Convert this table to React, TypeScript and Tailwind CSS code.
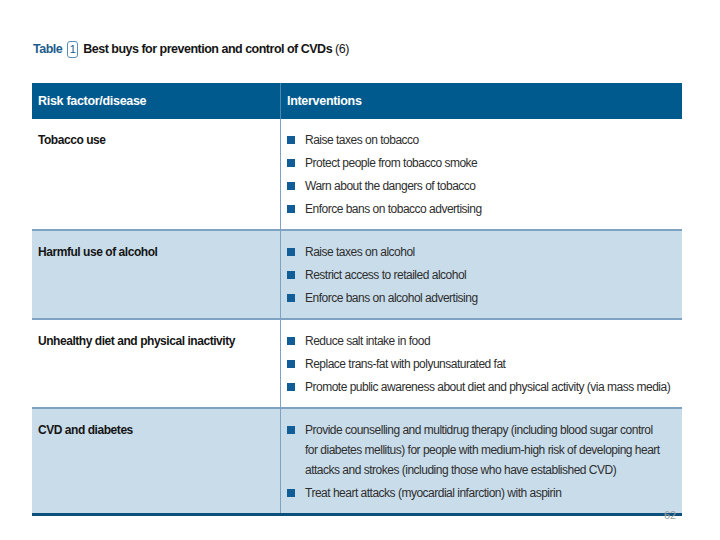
const rows = [
  {
    label: 'Tobacco use',
    shaded: false,
    items: [
      ['Raise taxes on tobacco'],
      ['Protect people from tobacco smoke'],
      ['Warn about the dangers of tobacco'],
      ['Enforce bans on tobacco advertising'],
    ],
  },
  {
    label: 'Harmful use of alcohol',
    shaded: true,
    items: [['Raise taxes on alcohol'], ['Restrict access to retailed alcohol'], ['Enforce bans on alcohol advertising']],
  },
  {
    label: 'Unhealthy diet and physical inactivity',
    shaded: false,
    items: [
      ['Reduce salt intake in food'],
      ['Replace trans-fat with polyunsaturated fat'],
      ['Promote public awareness about diet and physical activity (via mass media)'],
    ],
  },
  {
    label: 'CVD and diabetes',
    shaded: true,
    items: [
      [
        'Provide counselling and multidrug therapy (including blood sugar control',
        'for diabetes mellitus) for people with medium-high risk of developing heart',
        'attacks and strokes (including those who have established CVD)',
      ],
      ['Treat heart attacks (myocardial infarction) with aspirin'],
    ],
  },
]

export default function App() {
  return (
    <div
      className="relative w-[720px] h-[540px] bg-white text-[#2e2e2e]"
      style={{ fontFamily: '"Liberation Sans", Arial, sans-serif' }}
    >
      <div className="px-[32px] pt-[39px]">
        {/* Title */}
        <div className="flex items-center h-[20px] text-[12.5px] font-bold tracking-[-0.5px]">
          <span className="text-[#1d5c8c] ml-[1px]">Table</span>
          <span className="ml-[5px] mr-[5px] flex items-center justify-center w-[11px] h-[17px] border border-[#5a8fba] rounded-[3px] text-[11px] font-normal text-[#1d5c8c] tracking-normal">
            1
          </span>
          <span className="text-[#151515]">
            Best buys for prevention and control of CVDs <span className="font-normal">(6)</span>
          </span>
        </div>

        {/* Table */}
        <div className="mt-[24px] w-[650px]">
          <div className="grid grid-cols-[249px_1fr] h-[36px] bg-[#005a8e] text-white font-bold text-[12.5px] tracking-[-0.3px]">
            <div className="flex items-center pl-[6px] border-r border-[#4c86b3]">Risk factor/disease</div>
            <div className="flex items-center pl-[6px]">Interventions</div>
          </div>

          {rows.map((row, i) => (
            <div
              key={row.label}
              className={`grid grid-cols-[249px_1fr] leading-[20px] ${row.shaded ? 'bg-[#c9dcea]' : 'bg-white'} ${
                i < rows.length - 1 ? 'border-b-2 border-[#7ea3c2]' : 'border-b-[3px] border-[#0d4f7c]'
              }`}
            >
              <div className="pl-[6px] pt-[11px] pb-[10px] border-r border-[#7ea3c2] font-bold text-[12px] tracking-[-0.45px] text-[#151515]">
                {row.label}
              </div>
              <div className="pl-[6px] pt-[11px] pb-[10px] flex flex-col gap-[3px] text-[12px] tracking-[-0.5px]">
                {row.items.map((lines) => (
                  <div key={lines[0]} className="flex">
                    <span className="mt-[6px] w-[8px] h-[8px] shrink-0 bg-[#115d97]" />
                    <span className="ml-[10px] whitespace-nowrap">
                      {lines.map((l, j) => (
                        <span key={j} className="block">
                          {l}
                        </span>
                      ))}
                    </span>
                  </div>
                ))}
              </div>
            </div>
          ))}
        </div>
      </div>

      <span className="absolute left-[664px] top-[508px] text-[11px] leading-[14px] text-[#a0a0a0]">62</span>
    </div>
  )
}
